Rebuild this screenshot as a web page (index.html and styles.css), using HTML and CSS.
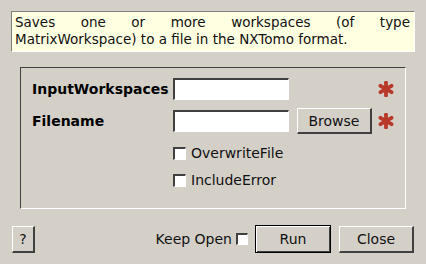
FILE: index.html
```html
<!DOCTYPE html>
<html>
<head>
<meta charset="utf-8">
<link rel="stylesheet" href="styles.css">
</head>
<body>
<div class="dialog">
  <div class="desc"><span class="desc-line full">Saves one or more workspaces (of type</span><span class="desc-line">MatrixWorkspace) to a file in the NXTomo format.</span></div>
  <div class="group">
    <div class="grid">
      <div class="label">InputWorkspaces</div>
      <div class="input"></div>
      <div></div>
      <svg class="star" width="16" height="16" viewBox="0 0 16 16"><g stroke="#b8392a" stroke-width="3.8" stroke-linecap="round"><line x1="8" y1="1.6" x2="8" y2="14.4"/><line x1="2.5" y1="4.8" x2="13.5" y2="11.2"/><line x1="2.5" y1="11.2" x2="13.5" y2="4.8"/></g></svg>

      <div class="label">Filename</div>
      <div class="input"></div>
      <div class="btn browse">Browse</div>
      <svg class="star" width="16" height="16" viewBox="0 0 16 16"><g stroke="#b8392a" stroke-width="3.8" stroke-linecap="round"><line x1="8" y1="1.6" x2="8" y2="14.4"/><line x1="2.5" y1="4.8" x2="13.5" y2="11.2"/><line x1="2.5" y1="11.2" x2="13.5" y2="4.8"/></g></svg>

      <div></div>
      <div class="check-row"><span class="cb"></span><span>OverwriteFile</span></div>
      <div></div><div></div>

      <div></div>
      <div class="check-row"><span class="cb"></span><span>IncludeError</span></div>
      <div></div><div></div>
    </div>
  </div>
  <div class="bottom">
    <div class="btn help">?</div>
    <div class="spacer"></div>
    <span class="keep">Keep Open</span>
    <span class="cb small"></span>
    <div class="btn run">Run</div>
    <div class="btn close">Close</div>
  </div>
</div>
</body>
</html>
```
FILE: styles.css
```css
html, body {
  margin: 0;
  padding: 0;
  background: #d4d0c8;
}
body {
  width: 426px;
  height: 264px;
  overflow: hidden;
  font-family: "DejaVu Sans", sans-serif;
  font-size: 14px;
  color: #000;
}
.dialog {
  display: flex;
  flex-direction: column;
  padding: 11px 12px 0 11px;
}
.desc {
  width: 404px;
  box-sizing: border-box;
  height: 41px;
  background: #ffffe1;
  border-top: 1px solid #808080;
  border-left: 1px solid #808080;
  border-right: 1px solid #ffffff;
  border-bottom: 1px solid #ffffff;
  padding: 2px 4px 0 3px;
  font-size: 13.5px;
  line-height: 17px;
  color: #111;
}
.desc-line {
  display: block;
  white-space: nowrap;
}
.desc-line.full {
  text-align: justify;
  text-align-last: justify;
}
.group {
  margin: 15px 0 0 9px;
  width: 386px;
  height: 142px;
  box-sizing: border-box;
  border-top: 1px solid #404040;
  border-left: 1px solid #404040;
  border-right: 1px solid #ffffff;
  border-bottom: 1px solid #ffffff;
  padding: 5px 0 0 11px;
}
.grid {
  display: grid;
  grid-template-columns: 141px 116px 83px 22px;
  grid-template-rows: 32px 32px 32px 22px;
  align-items: center;
}
.label {
  font-weight: bold;
}
.input {
  width: 116px;
  height: 22px;
  box-sizing: border-box;
  background: #fff;
  border-top: 2px solid #404040;
  border-left: 2px solid #404040;
  border-right: 1px solid #ffffff;
  border-bottom: 1px solid #ffffff;
}
.btn {
  box-sizing: border-box;
  background: #d4d0c8;
  border-top: 1px solid #ffffff;
  border-left: 1px solid #ffffff;
  border-right: 2px solid #404040;
  border-bottom: 2px solid #404040;
  display: flex;
  align-items: center;
  justify-content: center;
  color: #111;
}
.browse {
  margin-left: 8px;
  width: 75px;
  height: 26px;
}
.star {
  justify-self: end;
}
.check-row {
  display: flex;
  align-items: center;
  gap: 5px;
  color: #111;
}
.cb {
  display: inline-block;
  width: 13px;
  height: 13px;
  box-sizing: border-box;
  background: #fff;
  border-top: 2px solid #404040;
  border-left: 2px solid #404040;
  border-right: 1px solid #ffffff;
  border-bottom: 1px solid #ffffff;
}
.bottom {
  margin-top: 16px;
  display: flex;
  align-items: center;
  height: 28px;
  padding-left: 1px;
}
.help {
  width: 23px;
  height: 27px;
}
.spacer {
  flex: 1;
}
.keep {
  margin-right: 4px;
  color: #111;
}
.cb.small {
  width: 12px;
  height: 12px;
  margin-right: 7px;
}
.run {
  width: 76px;
  height: 28px;
  border: 1px solid #000;
  box-shadow: inset 1px 1px 0 #fff, inset -1px -1px 0 #404040;
  margin-right: 8px;
}
.close {
  width: 75px;
  height: 27px;
}
```
